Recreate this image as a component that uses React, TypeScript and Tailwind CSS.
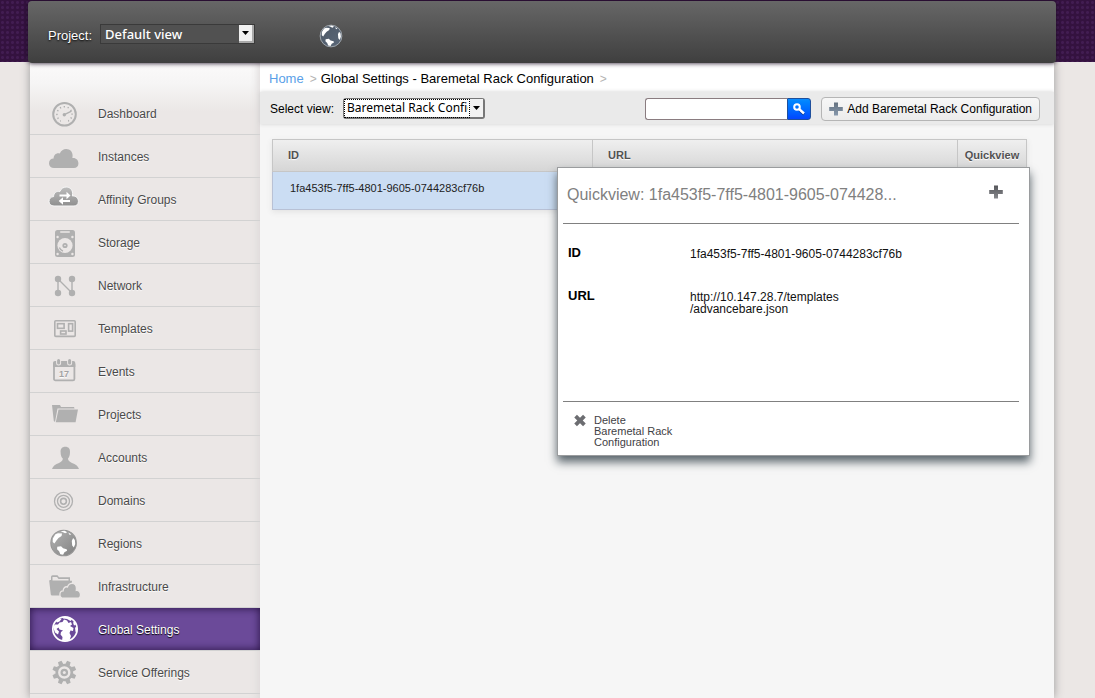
import { useState } from 'react';
import type { ReactNode } from 'react';

const cloud = 'M7 29 C4 29 2 27 2 24.5 C2 21.5 4 19.6 6.6 19.6 C6.6 16 9.5 13.6 12.8 14.6 C14 11.6 16.4 10 19.2 10 C23 10 25.6 12.8 25.6 16.4 L25.4 19 C29 18.6 31.4 21 31.4 24.4 C31.4 27.2 29.6 29 27 29 Z';

function Globe({ id, cx, cy, r, from, to, rim }: { id: string; cx: number; cy: number; r: number; from: string; to: string; rim: string }) {
  return (
    <g transform={`translate(${cx} ${cy}) scale(${r / 13})`}>
      <defs>
        <linearGradient id={id} x1="0" y1="0" x2="1" y2="1">
          <stop offset="0" stopColor={from} />
          <stop offset="1" stopColor={to} />
        </linearGradient>
      </defs>
      <circle r="12.5" fill={`url(#${id})`} stroke={rim} strokeWidth="1" />
      <path fill="#fff" d="M-10.5 -4.5 L-8 -8.5 L-5.5 -9.5 L-1.5 -9.2 L-2 -6.8 L-5 -5 L-7 -2.5 L-9 .5 L-10.6 -1 Z M-3 -11.6 L1 -12 L3.5 -10.6 L1.5 -9.6 L-.5 -10.6 Z M4.5 -10.2 L7.5 -8.6 L6 -7.8 Z M9.3 -5 L11 -3 L11.4 1 L10 4.5 L8.4 2.5 L8 -2 Z M-6.2 3.6 L-2.5 3.2 L-.5 5.2 L3 6 L3.4 7.6 L.8 9 L-.5 11.4 L-3.2 11 L-4.4 8 L-6.4 6 Z" />
    </g>
  );
}

const icons: Record<string, ReactNode> = {
  Dashboard: (
    <>
      <circle cx="17.5" cy="18.3" r="11.3" fill="none" stroke="#b0b0b0" strokeWidth="2" />
      <circle cx="17.5" cy="18.3" r="7.6" fill="none" stroke="#b0b0b0" strokeWidth="1.5" strokeDasharray="1.3 2.68" pathLength="47.8" transform="rotate(144 17.5 18.3)" />
      <path fill="#ebe7e6" d="M14 23 h7 v5 h-7z" />
      <circle cx="17.3" cy="18.8" r="1.7" fill="#b0b0b0" />
      <path stroke="#b0b0b0" strokeWidth="1.4" strokeLinecap="round" d="M17.3 18.6 L24 15.4" />
    </>
  ),
  Instances: <path d={cloud} fill="#b0b0b0" />,
  'Affinity Groups': (
    <>
      <defs>
        <linearGradient id="affinity" x1="0" y1="0" x2="0" y2="1">
          <stop offset="0" stopColor="#bdbdbd" />
          <stop offset="1" stopColor="#8f8f8f" />
        </linearGradient>
      </defs>
      <path d={cloud} transform="translate(0 -5)" fill="url(#affinity)" stroke="#f8f8f8" strokeWidth="1" />
      <path fill="#fff" d="M12.5 12.5 h7 v-2.7 l4 3.7 l-4 3.7 v-2.7 h-7z M23 18 h-7 v-2.7 l-4.3 3.7 l4.3 3.7 v-2.7 h7z" />
    </>
  ),
  Storage: (
    <>
      <rect x="8" y="5" width="20" height="27" rx="2.5" fill="#b0b0b0" />
      <rect x="13" y="6.2" width="10" height="1.6" rx=".8" fill="#ebe7e6" />
      <g fill="#ebe7e6">
        <circle cx="10.6" cy="12" r="1.2" />
        <circle cx="25.4" cy="12" r="1.2" />
        <circle cx="10.6" cy="29" r="1.2" />
        <circle cx="25.4" cy="29" r="1.2" />
        <circle cx="18" cy="20.5" r="7.6" />
      </g>
      <circle cx="18" cy="20.5" r="2.6" fill="#b0b0b0" />
      <circle cx="18" cy="20.5" r=".8" fill="#ebe7e6" />
      <path d="M12.4 22.5 A6 6 0 0 0 16 26.2" fill="none" stroke="#b0b0b0" strokeWidth="1.3" />
    </>
  ),
  Network: (
    <>
      <path d="M11 11 V25 M11 11 L25 25 M25 11 V25" stroke="#b0b0b0" strokeWidth="1.4" fill="none" />
      <g fill="#b0b0b0">
        <circle cx="11" cy="11" r="3.2" />
        <circle cx="25" cy="11" r="3.2" />
        <circle cx="11" cy="25" r="3.2" />
        <circle cx="25" cy="25" r="3.2" />
      </g>
    </>
  ),
  Templates: (
    <g fill="none" stroke="#b0b0b0" strokeWidth="1.6">
      <rect x="7.8" y="9.8" width="20.4" height="15.6" rx="1" />
      <rect x="10.5" y="12.7" width="6.6" height="4.6" />
      <rect x="21.6" y="12.7" width="4" height="7.4" />
      <rect x="13.6" y="20" width="5.4" height="3" />
    </g>
  ),
  Events: (
    <>
      <rect x="7" y="9" width="20.4" height="17.4" rx="1.5" fill="none" stroke="#b0b0b0" strokeWidth="1.8" />
      <path fill="#b0b0b0" d="M6 9 q0 -2 2 -2 h18.3 q2 0 2 2 v4 h-22.3z" />
      <path stroke="#ebe7e6" strokeWidth="5" strokeLinecap="round" d="M11.6 6.5 v2.5 M22.6 6.5 v2.5" />
      <path stroke="#b0b0b0" strokeWidth="3" strokeLinecap="round" d="M11.6 6.5 v2.5 M22.6 6.5 v2.5" />
      <text x="17" y="23" textAnchor="middle" fontSize="9" fontWeight="700" fill="#a2a2a2">17</text>
    </>
  ),
  Projects: (
    <>
      <path fill="#b0b0b0" d="M5 8 h8 l1 2 h13 l.6 1.6 H10.5 L8 25 L6.8 24 Z" />
      <path fill="#b0b0b0" d="M11.5 12.6 H31 L28.6 25.2 H8.8 Z" />
    </>
  ),
  Accounts: (
    <path fill="#b0b0b0" d="M18.3 6.7 C21.7 6.7 23.2 8.8 23 12 C23 15 22.2 17.5 21 18.6 C21 20.8 22.5 21.8 25 22.9 C28.5 24.4 31 25.6 32 29 H5 C6 25.6 8.5 24.4 12 22.9 C14.5 21.8 15.8 20.8 15.8 18.6 C14.4 17.5 13.6 15 13.6 12 C13.4 8.8 15 6.7 18.3 6.7 Z" />
  ),
  Domains: (
    <g fill="none" stroke="#b0b0b0" strokeWidth="1.3">
      <circle cx="16.5" cy="18.3" r="9" />
      <circle cx="16.5" cy="18.3" r="6" />
      <circle cx="16.5" cy="18.3" r="2.9" strokeWidth="1.6" />
    </g>
  ),
  Regions: <Globe id="regions" cx={16.6} cy={17} r={13.3} from="#b4b4b4" to="#808080" rim="#969696" />,
  Infrastructure: (
    <>
      <path fill="#b0b0b0" d="M4 11 V8 q0 -1.7 1.5 -1.7 h5 l1.5 2 h11 v3.5 h2 l-.6 6 L16 26.5 H5 q-1 0 -1.2 -1 L2.2 12 q0 -1 1 -1z" />
      <path fill="#ebe7e6" d="M5.5 8 h4.5 l1.5 2 h10 v1.5 h-16z" />
      <path d={cloud} transform="translate(11.5 6.6) scale(.7 .78)" fill="#b0b0b0" stroke="#ebe7e6" strokeWidth="1.8" />
    </>
  ),
  'Global Settings': (
    <>
      <circle cx="18" cy="17" r="12.2" fill="none" stroke="#fff" strokeWidth="1.7" />
      <path fill="#fff" d="M6 15 L8 12.5 L11 12.5 L12.5 10.5 L15.5 10 L17 7.5 L20 8.5 L21.5 11 L24 10 L25 12.5 L23 14 L26.5 16 L26 19 L23.5 18.5 L22.5 21 L24 24 L22.5 28.5 L15 29 L15.5 25 L13.5 22.5 L14 20 L16 18.5 L12.5 17.5 L11.5 15.5 L9.5 17 L12 19.5 L11 22.5 L8 20.5 Z" />
      <path fill="#fff" d="M9 9 L12.5 6.5 L14.5 7 L12.5 9.5 L10 10.5 Z M15.5 5 L21 5 L25 7.5 L23.5 9 L20 7 L16 6.5 Z M26 10.5 L28 9.5 L29 12.5 L27 13.5 Z M28 15.5 L30 15 L30 19 L28.5 20 Z" />
    </>
  ),
  'Service Offerings': (
    <>
      <g fill="#b0b0b0" transform="translate(17.3 17.5)">
        {[0, 45, 90, 135].map((deg) => (
          <path key={deg} transform={`rotate(${deg + 22.5})`} d="M-2.4 -8 L-1.9 -12 H1.9 L2.4 -8 V8 L1.9 12 H-1.9 L-2.4 8 Z" />
        ))}
        <circle r="8.8" />
      </g>
      <circle cx="17.3" cy="17.5" r="5" fill="none" stroke="#ebe7e6" strokeWidth="2.4" />
      <circle cx="17.3" cy="17.5" r="1.5" fill="#ebe7e6" />
    </>
  ),
};

function Plus({ from, to, id }: { from: string; to: string; id: string }) {
  return (
    <svg width="14" height="14" viewBox="0 0 14 14" className="shrink-0">
      <defs>
        <linearGradient id={id} x1="0" y1="0" x2="0" y2="1">
          <stop offset="0" stopColor={from} />
          <stop offset="1" stopColor={to} />
        </linearGradient>
      </defs>
      <path fill={`url(#${id})`} d="M5 0.5 h4 v4.5 h4.8 v4 h-4.8 v4.5 h-4 v-4.5 h-4.8 v-4 h4.800z" />
    </svg>
  );
}

function Arrow() {
  return (
    <svg width="7" height="4" viewBox="0 0 7 4">
      <path d="M0 0 H7 L3.5 4 Z" fill="#000" />
    </svg>
  );
}

function Sidebar() {
  const [active, setActive] = useState('Global Settings');

  return (
    <nav className="w-[230px] shrink-0 pt-[29px] bg-[#ebe7e6] bg-[linear-gradient(to_bottom,#fbfafa,#f6f5f5_20px,#ebe7e6_48px)] shadow-[inset_-8px_0_8px_-6px_#dcd8d8]">
      {Object.keys(icons).map((name) => (
        <a
          key={name}
          href="#"
          onClick={() => setActive(name)}
          className={
            name === active
              ? 'flex items-center gap-[17px] h-[43px] pl-[17px] text-xs text-white border-b border-[#d2d2d2] bg-[#6b4a99] bg-clip-padding shadow-[inset_0_0_8px_#25103f] [text-shadow:0_1px_1px_#000]'
              : 'flex items-center gap-[17px] h-[43px] pl-[17px] text-xs text-[#4a4a4a] border-b border-[#d2d2d2] [text-shadow:0_1px_1px_#fff]'
          }
        >
          <svg width="34" height="34" viewBox="0 0 34 34">{icons[name]}</svg>
          <span className="pt-[2px]">{name}</span>
        </a>
      ))}
    </nav>
  );
}

function Quickview() {
  return (
    <div className="absolute top-7 -right-[3px] w-[473px] px-[5px] bg-white border border-[#9a9c9e] shadow-[0_6px_9px_#5a656c]">
      <div className="mr-[5px] flex items-start h-14 pt-[17px] pl-1 pr-4 border-b border-[#808080]">
        <h2 className="grow text-base leading-5 text-[#808080]">Quickview: 1fa453f5-7ff5-4801-9605-074428...</h2>
        <button aria-label="Expand">
          <Plus id="expand" from="#55565a" to="#87888d" />
        </button>
      </div>
      <dl className="mr-[5px] grid grid-cols-[122px_1fr] content-start gap-y-[19px] h-[178px] pt-[23px] pl-[5px] border-b border-[#808080] text-xs leading-3 text-[#111]">
        <dt className="h-6 font-bold text-[13px] leading-3 text-black">ID</dt>
        <dd className="pt-px">1fa453f5-7ff5-4801-9605-0744283cf76b</dd>
        <dt className="h-6 font-bold text-[13px] leading-3 text-black">URL</dt>
        <dd className="pt-px">http://10.147.28.7/templates<br />/advancebare.json</dd>
      </dl>
      <div className="h-[53px] pt-3 pl-[11px]">
        <button className="flex items-start gap-2 text-left text-[11px] leading-[11px] text-[#3f4145]">
          <svg width="12" height="13" viewBox="0 0 12 13" className="shrink-0">
            <path d="M1.6 2.1 L10.4 10.900 M10.4 2.1 L1.6 10.900" stroke="#6c6d71" strokeWidth="3.8" />
          </svg>
          <span className="w-[90px] pt-[1px]">Delete<br />Baremetal Rack Configuration</span>
        </button>
      </div>
    </div>
  );
}

export default function App() {
  return (
    <div className="flex flex-col min-h-screen bg-[#ebe7e5] font-['Liberation_Sans',Arial,sans-serif] text-black">
      <header className="h-[62px] pt-px pl-7 pr-[39px] bg-[#34123f] bg-[radial-gradient(#421d52_1px,transparent_2px)] bg-size-[5px_5px]">
        <div className="relative z-10 flex items-center h-[62px] pl-5 rounded bg-linear-to-b from-[#676767] to-[#3f3f3f] shadow-[0_0_5px_#1b0b23] text-[13px] text-white">
          <label htmlFor="project" className="pt-2 [text-shadow:0_1px_2px_#000]">Project:</label>
          <div className="relative ml-2 mt-1">
            <select id="project" className="block appearance-none w-[155px] h-5 pl-1 pr-5 border border-[#3a3a3a] bg-[#515151] font-['Noto_Sans',sans-serif] font-medium text-[13px] leading-4">
              <option>Default view</option>
            </select>
            <span className="absolute right-px top-px flex items-center justify-center w-[15px] h-[18px] bg-[#f0f0f0] border-r-2 border-b-2 border-[#a9a9a9] pointer-events-none">
              <Arrow />
            </span>
          </div>
          <button aria-label="Regions" className="ml-16 mt-2">
            <svg width="24" height="24" viewBox="0 0 24 24">
              <Globe id="region-switch" cx={12} cy={12} r={11.3} from="#4d5866" to="#5a6778" rim="#aab0b6" />
            </svg>
          </button>
        </div>
      </header>

      <div className="flex grow mt-px ml-[30px] mr-[41px] shadow-[0_0_9px_#9a9898]">
        <Sidebar />
        <main className="grow min-w-0 bg-[#f6f6f6]">
          <div className="flex items-center h-[29px] pt-[2px] pl-[9px] bg-white text-[13px]">
            <a href="#" className="text-[#5a9fe8]">Home</a>
            <span className="ml-[6px] mr-[4px] text-xs text-[#b4b4b4]">&gt;</span>
            <span>Global Settings - Baremetal Rack Configuration</span>
            <span className="ml-[6px] text-xs text-[#b4b4b4]">&gt;</span>
          </div>

          <div className="flex items-center h-8 pt-px pl-[10px] pr-[14px] bg-[#eaeaea] shadow-[0_0_4px_#d0d0d0] text-xs">
            <label htmlFor="view" className="pt-px">Select view:</label>
            <div className="relative ml-[9px]">
              <select id="view" className="block appearance-none w-[142px] h-[21px] pl-[3px] pr-[15px] rounded-[3px] border border-[#777] border-r-2 border-b-2 bg-white font-['Noto_Sans',sans-serif] text-xs leading-4">
                <option>Baremetal Rack Configuration</option>
              </select>
              <span className="absolute inset-px right-[15px] border border-dotted border-black pointer-events-none" />
              <span className="absolute right-[2px] top-px flex items-center justify-center w-[13px] h-[18px] bg-[#f2f2f2] pointer-events-none">
                <Arrow />
              </span>
            </div>
            <form className="flex ml-auto h-[22px]">
              <input aria-label="Search" className="w-[142px] rounded-l-[3px] border border-r-0 border-[#8a7c80] bg-white px-1 outline-none" />
              <button type="button" aria-label="Search" className="flex items-center justify-center w-6 rounded-r-[3px] border border-[#1e4f9c] bg-linear-to-b from-[#0a8cff] to-[#0645ff]">
                <svg width="14" height="14" viewBox="0 0 14 14" fill="none">
                  <path d="M7.5 8.5 L12 12.5" stroke="#023a9c" strokeWidth="2.5" />
                  <circle cx="5" cy="5" r="2.8" stroke="#fff" strokeWidth="2" />
                  <path d="M7.2 7.2 L12 11.5" stroke="#fff" strokeWidth="2.4" />
                </svg>
              </button>
            </form>
            <button className="flex items-center gap-1 h-6 ml-[10px] px-[7px] whitespace-nowrap rounded border border-[#b5b5b5] bg-linear-to-b from-[#f7f7f7] to-[#ececec]">
              <Plus id="add" from="#64717f" to="#8799ad" />
              Add Baremetal Rack Configuration
            </button>
          </div>

          <div className="relative mt-[15px] ml-3 mr-[27px]">
            <table className="w-full table-fixed border-collapse text-left text-[11px] shadow-[0_2px_6px_#e2e2e2]">
              <thead>
                <tr className="h-8 bg-linear-to-b from-[#efefef] to-[#d5d5d5] text-[#525252] [text-shadow:0_1px_1px_#fff]">
                  <th className="w-[320px] px-[15px] border border-[#c6c6c6]">ID</th>
                  <th className="px-[15px] border border-[#c6c6c6]">URL</th>
                  <th className="w-[69px] text-center border border-[#c6c6c6]">Quickview</th>
                </tr>
              </thead>
              <tbody>
                <tr className="h-[38px] align-top bg-[#cbddf3] text-[#222]">
                  <td className="pl-[17px] pt-2 border-l border-b border-[#b8c1d5]">1fa453f5-7ff5-4801-9605-0744283cf76b</td>
                  <td className="border-b border-[#b8c1d5]" />
                  <td className="border-r border-b border-[#b8c1d5]" />
                </tr>
              </tbody>
            </table>
            <Quickview />
          </div>
        </main>
      </div>
    </div>
  );
}
